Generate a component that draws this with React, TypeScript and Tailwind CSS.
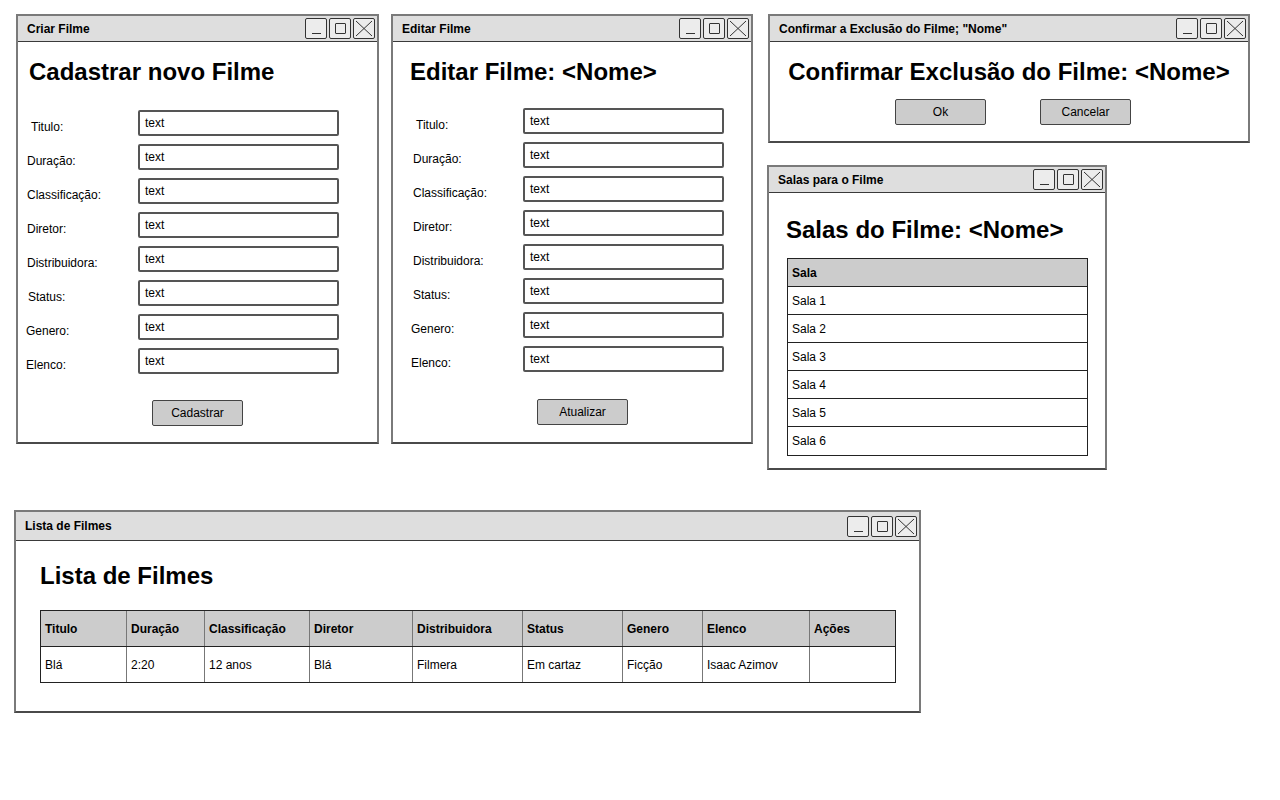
import React from "react";

// janelas do wireframe (estilo Balsamiq)
interface WindowProps {
  title: string;
  className: string;
  barClassName?: string;
  children: React.ReactNode;
}

const Controls: React.FC = () => (
  <div className="flex gap-[2px] pr-[2px]">
    <div className="w-[22px] h-[21px] border border-[#333] rounded-[2px] bg-[#ececec] flex items-end justify-center pb-[4px]">
      <div className="w-[9px] h-[1px] bg-[#333]"></div>
    </div>
    <div className="w-[22px] h-[21px] border border-[#333] rounded-[2px] bg-[#ececec] flex items-center justify-center">
      <div className="w-[11px] h-[11px] border border-[#333] rounded-[1px]"></div>
    </div>
    <div className="w-[22px] h-[21px] border border-[#333] rounded-[2px] bg-[#ececec] flex items-center justify-center">
      <svg width="18" height="17" viewBox="0 0 18 17">
        <path d="M1 1 L17 16 M17 1 L1 16" stroke="#333" strokeWidth="1" fill="none" />
      </svg>
    </div>
  </div>
);

const Window: React.FC<WindowProps> = ({ title, className, barClassName, children }) => (
  <div className={"absolute bg-white border-2 border-[#7a7a7a] border-b-[#4a4a4a] flex flex-col " + className}>
    <div className={"bg-[#dedede] border-b border-[#3a3a3a] flex items-center justify-between pl-[9px] " + (barClassName || "h-[26px]")}>
      <span className="text-[12px] font-bold text-black">{title}</span>
      <Controls />
    </div>
    {children}
  </div>
);

const fields = [
  { label: "Titulo:", off1: "pl-[13px]", off2: "pl-[23px]" },
  { label: "Duração:", off1: "pl-[9px]", off2: "pl-[20px]" },
  { label: "Classificação:", off1: "pl-[9px]", off2: "pl-[20px]" },
  { label: "Diretor:", off1: "pl-[9px]", off2: "pl-[20px]" },
  { label: "Distribuidora:", off1: "pl-[9px]", off2: "pl-[20px]" },
  { label: "Status:", off1: "pl-[10px]", off2: "pl-[20px]" },
  { label: "Genero:", off1: "pl-[8px]", off2: "pl-[18px]" },
  { label: "Elenco:", off1: "pl-[8px]", off2: "pl-[18px]" },
];

const Button: React.FC<{ label: string; className?: string }> = ({ label, className }) => (
  <div className={"w-[91px] h-[26px] bg-[#cccccc] border-[1.5px] border-[#444] rounded-[2px] flex items-center justify-center text-[12px] " + (className || "")}>
    {label}
  </div>
);

const FormRows: React.FC<{ labelCol: string; second?: boolean }> = ({ labelCol, second }) => (
  <div className="flex flex-col gap-[8px]">
    {fields.map((f) => (
      <div key={f.label} className="flex">
        <div className={"shrink-0 pt-[10px] leading-[14px] text-[12px] " + labelCol + " " + (second ? f.off2 : f.off1)}>{f.label}</div>
        <div className="w-[201px] h-[26px] border-2 border-[#555] rounded-[2px] pl-[5px] pt-[4px] text-[12px] leading-[14px]">text</div>
      </div>
    ))}
  </div>
);

const salas = ["Sala 1", "Sala 2", "Sala 3", "Sala 4", "Sala 5", "Sala 6"];

const cols = ["Titulo", "Duração", "Classificação", "Diretor", "Distribuidora", "Status", "Genero", "Elenco", "Ações"];
const row = ["Blá", "2:20", "12 anos", "Blá", "Filmera", "Em cartaz", "Ficção", "Isaac Azimov", ""];

export default function App() {
  return (
    <div className="relative w-[1280px] h-[800px] bg-white text-black font-['Comic_Sans_MS','Liberation_Sans',sans-serif] overflow-hidden">
      {/* Criar Filme */}
      <Window title="Criar Filme" className="left-[16px] top-[14px] w-[363px] h-[430px]">
        <h1 className="font-['Liberation_Sans',Arial,sans-serif] font-bold text-[24px] leading-[28px] mt-[16px] pl-[11px]">
          Cadastrar novo Filme
        </h1>
        <div className="mt-[24px]">
          <FormRows labelCol="w-[120px]" />
        </div>
        <div className="flex justify-center mt-[26px]">
          <Button label="Cadastrar" />
        </div>
      </Window>

      {/* Editar Filme */}
      <Window title="Editar Filme" className="left-[391px] top-[14px] w-[362px] h-[430px]">
        <h1 className="font-['Liberation_Sans',Arial,sans-serif] font-bold text-[24px] leading-[28px] mt-[16px] pl-[17px]">
          Editar Filme: &lt;Nome&gt;
        </h1>
        <div className="mt-[22px]">
          <FormRows labelCol="w-[130px]" second />
        </div>
        <div className="flex mt-[27px] pl-[144px]">
          <Button label="Atualizar" className="w-[90px] h-[25px]" />
        </div>
      </Window>

      {/* Confirmar exclusão */}
      <Window title={'Confirmar a Exclusão do Filme; "Nome"'} className="left-[768px] top-[14px] w-[482px] h-[129px]">
        <h1 className="font-['Liberation_Sans',Arial,sans-serif] font-bold text-[24px] leading-[28px] mt-[16px] text-center">
          Confirmar Exclusão do Filme: &lt;Nome&gt;
        </h1>
        <div className="flex justify-center gap-[54px] mt-[13px] pl-[8px]">
          <Button label="Ok" />
          <Button label="Cancelar" />
        </div>
      </Window>

      {/* Salas para o Filme */}
      <Window title="Salas para o Filme" className="left-[767px] top-[165px] w-[340px] h-[305px]">
        <h1 className="font-['Liberation_Sans',Arial,sans-serif] font-bold text-[24px] leading-[28px] mt-[23px] pl-[17px]">
          Salas do Filme: &lt;Nome&gt;
        </h1>
        <div className="mt-[14px] ml-[18px] w-[301px] border border-[#222]">
          <div className="h-[28px] bg-[#cccccc] border-b border-[#222] flex items-center pl-[4px] text-[12px] font-bold">Sala</div>
          {salas.map((s, i) => (
            <div key={s} className={"h-[28px] flex items-center pl-[4px] text-[12px] " + (i < salas.length - 1 ? "border-b border-[#222]" : "")}>
              {s}
            </div>
          ))}
        </div>
      </Window>

      {/* Lista de Filmes */}
      <Window title="Lista de Filmes" className="left-[14px] top-[510px] w-[907px] h-[203px]" barClassName="h-[29px]">
        <h1 className="font-['Liberation_Sans',Arial,sans-serif] font-bold text-[24px] leading-[28px] mt-[21px] pl-[24px]">
          Lista de Filmes
        </h1>
        <div className="mt-[20px] ml-[24px] w-[856px] border border-[#222]">
          <div className="grid grid-cols-[85px_78px_105px_103px_110px_100px_80px_107px_86px] h-[36px] bg-[#cccccc] border-b border-[#222]">
            {cols.map((c, i) => (
              <div key={c} className={"flex items-center pl-[4px] text-[12px] font-bold " + (i > 0 ? "border-l border-[#777]" : "")}>
                {c}
              </div>
            ))}
          </div>
          <div className="grid grid-cols-[85px_78px_105px_103px_110px_100px_80px_107px_86px] h-[35px]">
            {row.map((c, i) => (
              <div key={i} className={"flex items-center pl-[4px] text-[12px] " + (i > 0 ? "border-l border-[#777]" : "")}>
                {c}
              </div>
            ))}
          </div>
        </div>
      </Window>
    </div>
  );
}
